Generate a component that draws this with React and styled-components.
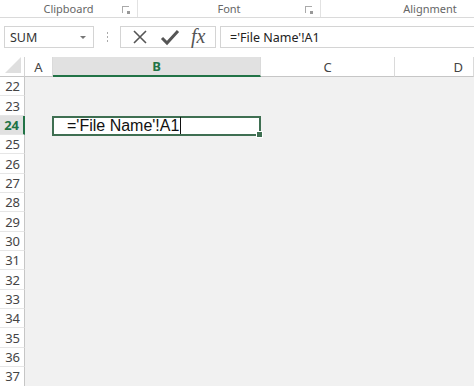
import React from 'react';
import styled, { createGlobalStyle } from 'styled-components';

const Global = createGlobalStyle`
  html, body { margin: 0; padding: 0; background: #ffffff; }
  body { font-family: "Noto Sans", "Open Sans", sans-serif; overflow: hidden; }
`;

const ROW_H = 19.35;
const COLS = '25px 28px 208px 134px 1fr';

const Window = styled.div`
  width: 474px;
  height: 386px;
  overflow: hidden;
  display: flex;
  flex-direction: column;
  background: #fff;
`;

const Ribbon = styled.div`
  display: flex;
  height: 17px;
  border-bottom: 1px solid #dadada;
  flex: none;
`;

const Group = styled.div`
  position: relative;
  width: ${p => p.w}px;
  flex: none;
  display: flex;
  align-items: center;
  justify-content: center;
  border-right: ${p => (p.last ? 'none' : '1px solid #e2e2e2')};
  font-size: 11px;
  color: #666;
  box-sizing: border-box;
`;

const Launcher = styled.span`
  position: absolute;
  right: 8px;
  top: 6px;
  width: 6px;
  height: 6px;
  border-left: 1px solid #aaa;
  border-top: 1px solid #aaa;
  &::after {
    content: '';
    position: absolute;
    right: -1px;
    bottom: -1px;
    width: 3px;
    height: 3px;
    background: #999;
  }
`;

const FormulaRow = styled.div`
  display: flex;
  align-items: center;
  height: 22px;
  margin-top: 8px;
  padding-left: 4px;
  flex: none;
`;

const NameBox = styled.div`
  width: 90px;
  height: 22px;
  box-sizing: border-box;
  border: 1px solid #d4d4d4;
  display: flex;
  align-items: center;
  justify-content: space-between;
  padding: 0 7px 0 5px;
  font-size: 12.5px;
  color: #333;
`;

const Arrow = styled.span`
  width: 0;
  height: 0;
  border-left: 3px solid transparent;
  border-right: 3px solid transparent;
  border-top: 3px solid #777;
`;

const Dots = styled.div`
  width: 26px;
  display: flex;
  flex-direction: column;
  align-items: center;
  gap: 2px;
  span {
    width: 1px;
    height: 2px;
    background: #aaa;
  }
`;

const Buttons = styled.div`
  width: 96px;
  height: 22px;
  box-sizing: border-box;
  border: 1px solid #d4d4d4;
  display: flex;
  align-items: center;
  justify-content: space-around;
  padding: 0 4px;
`;

const Fx = styled.span`
  font-family: "Liberation Serif", "DejaVu Serif", serif;
  font-style: italic;
  font-size: 20px;
  color: #555;
  line-height: 1;
  margin-top: -3px;
`;

const Formula = styled.div`
  flex: 1;
  height: 22px;
  margin-left: 4px;
  box-sizing: border-box;
  border: 1px solid #d4d4d4;
  border-right: none;
  display: flex;
  align-items: center;
  padding-left: 9px;
  font-size: 12.5px;
  color: #222;
`;

const Sheet = styled.div`
  margin-top: 9px;
  flex: 1;
  display: grid;
  grid-template-columns: ${COLS};
  grid-template-rows: 20px repeat(16, ${ROW_H}px);
  background: #f1f1f1;
`;

const Corner = styled.div`
  background: #fff;
  border-bottom: 1px solid #c6c6c6;
  border-right: 1px solid #d4d4d4;
  position: relative;
  &::after {
    content: '';
    position: absolute;
    right: 3px;
    bottom: 3px;
    border-left: 16px solid transparent;
    border-bottom: 16px solid #dfdfdf;
  }
`;

const ColHead = styled.div`
  display: flex;
  align-items: center;
  justify-content: ${p => (p.end ? 'flex-end' : 'center')};
  padding-right: ${p => (p.end ? '10px' : '0')};
  font-size: 13px;
  box-sizing: border-box;
  background: ${p => (p.sel ? '#e1e1e1' : '#fff')};
  color: ${p => (p.sel ? '#217346' : '#444')};
  font-weight: ${p => (p.sel ? 700 : 400)};
  border-right: 1px solid #dadada;
  border-bottom: ${p => (p.sel ? '2px solid #217346' : '1px solid #c6c6c6')};
`;

const RowHead = styled.div`
  display: flex;
  align-items: center;
  justify-content: flex-end;
  padding-right: 4px;
  font-size: 13px;
  box-sizing: border-box;
  background: ${p => (p.sel ? '#e1e1e1' : '#fff')};
  color: ${p => (p.sel ? '#217346' : '#444')};
  font-weight: ${p => (p.sel ? 700 : 400)};
  border-bottom: 1px solid #e6e6e6;
  border-right: ${p => (p.sel ? '2px solid #217346' : '1px solid #c6c6c6')};
`;

const Cell = styled.div`
  grid-column: ${p => p.col};
`;

const ActiveCell = styled.div`
  grid-column: 3;
  position: relative;
  background: #fff;
  border: 2px solid #3f6f52;
  margin: 0 0 -1px -1px;
  display: flex;
  align-items: center;
  padding-left: 13px;
  font-family: "Liberation Sans", Arial, sans-serif;
  font-size: 16px;
  color: #111;
  &::after {
    content: '';
    position: absolute;
    right: -4px;
    bottom: -4px;
    width: 5px;
    height: 5px;
    background: #3f6f52;
    border: 1px solid #fff;
  }
`;

const Caret = styled.span`
  display: inline-block;
  width: 1px;
  height: 17px;
  background: #111;
  margin-left: 1px;
`;

const XIcon = () => (
  <svg width="18" height="18" viewBox="0 0 18 18">
    <path d="M3 3 L15 15 M15 3 L3 15" stroke="#555" strokeWidth="1.6" fill="none" />
  </svg>
);

const CheckIcon = () => (
  <svg width="20" height="18" viewBox="0 0 20 18">
    <path d="M2 10 L7 15 L18 3" stroke="#555" strokeWidth="3" fill="none" strokeLinejoin="miter" />
  </svg>
);

const rows = Array.from({ length: 16 }, (_, i) => 22 + i);

export default function App() {
  return (
    <Window>
      <Global />
      <Ribbon>
        <Group w={138}>Clipboard<Launcher /></Group>
        <Group w={183}>Font<Launcher /></Group>
        <Group w={218} last>Alignment</Group>
      </Ribbon>
      <FormulaRow>
        <NameBox>SUM<Arrow /></NameBox>
        <Dots><span /><span /><span /></Dots>
        <Buttons>
          <XIcon />
          <CheckIcon />
          <Fx>fx</Fx>
        </Buttons>
        <Formula>='File Name'!A1</Formula>
      </FormulaRow>
      <Sheet>
        <Corner />
        <ColHead>A</ColHead>
        <ColHead sel>B</ColHead>
        <ColHead>C</ColHead>
        <ColHead end>D</ColHead>
        {rows.map(r => (
          <React.Fragment key={r}>
            <RowHead sel={r === 24}>{r}</RowHead>
            <Cell col={2} />
            {r === 24 ? (
              <ActiveCell>='File Name'!A1<Caret /></ActiveCell>
            ) : (
              <Cell col={3} />
            )}
            <Cell col={4} />
            <Cell col={5} />
          </React.Fragment>
        ))}
      </Sheet>
    </Window>
  );
}
